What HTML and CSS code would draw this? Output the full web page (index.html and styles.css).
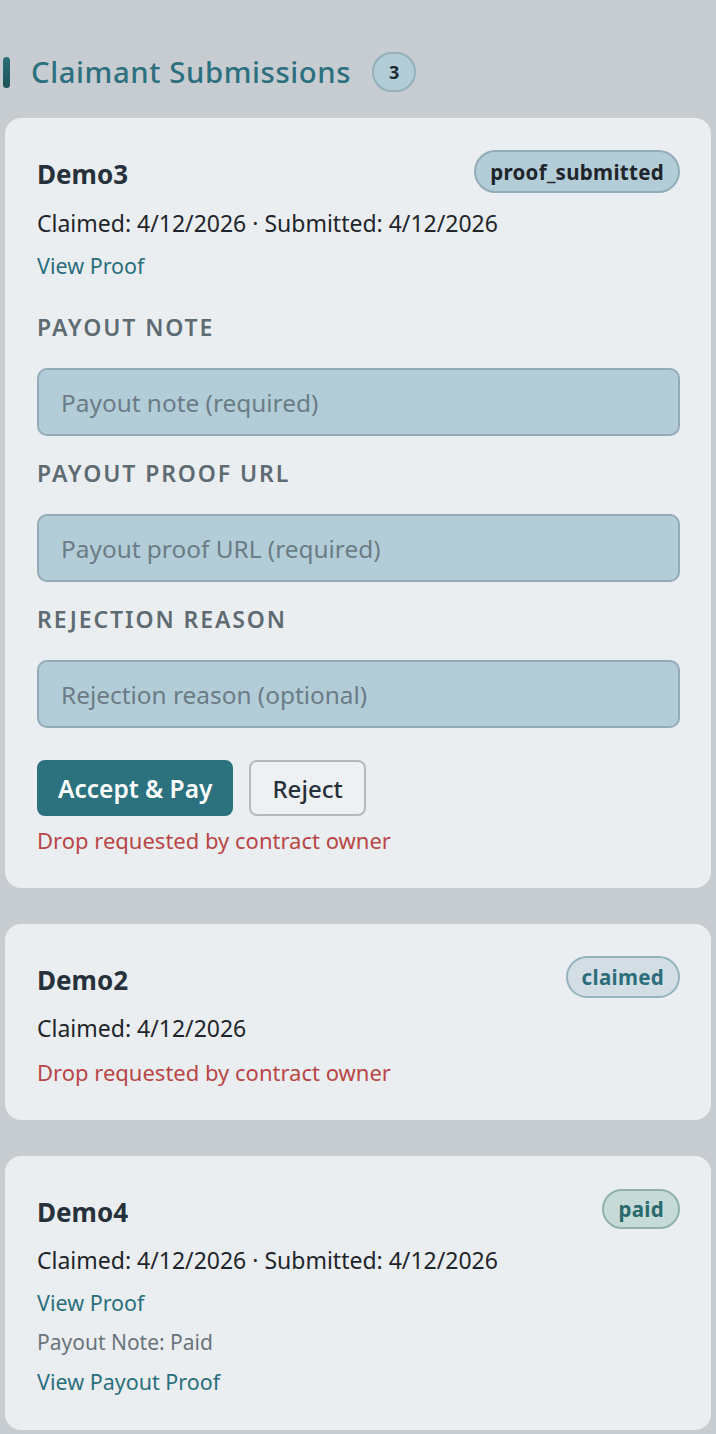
FILE: index.html
```html
<!DOCTYPE html>
<html lang="en">
<head>
<meta charset="utf-8">
<title>Claimant Submissions</title>
<link rel="stylesheet" href="styles.css">
</head>
<body>
<main class="page">
  <header class="section-head">
    <span class="accent-bar"></span>
    <h2 class="section-title">Claimant Submissions</h2>
    <span class="count-badge">3</span>
  </header>

  <article class="card">
    <div class="card-head">
      <h3 class="card-title">Demo3</h3>
      <span class="status status-proof">proof_submitted</span>
    </div>
    <p class="meta">Claimed: 4/12/2026 · Submitted: 4/12/2026</p>
    <a class="link" href="#">View Proof</a>
    <label class="field-label">Payout Note</label>
    <input class="field" type="text" placeholder="Payout note (required)">
    <label class="field-label">Payout Proof URL</label>
    <input class="field" type="text" placeholder="Payout proof URL (required)">
    <label class="field-label">Rejection Reason</label>
    <input class="field" type="text" placeholder="Rejection reason (optional)">
    <div class="actions">
      <button class="btn btn-primary">Accept &amp; Pay</button>
      <button class="btn btn-outline">Reject</button>
    </div>
    <p class="warn">Drop requested by contract owner</p>
  </article>

  <article class="card">
    <div class="card-head">
      <h3 class="card-title">Demo2</h3>
      <span class="status status-claimed">claimed</span>
    </div>
    <p class="meta">Claimed: 4/12/2026</p>
    <p class="warn">Drop requested by contract owner</p>
  </article>

  <article class="card">
    <div class="card-head">
      <h3 class="card-title">Demo4</h3>
      <span class="status status-paid">paid</span>
    </div>
    <p class="meta">Claimed: 4/12/2026 · Submitted: 4/12/2026</p>
    <a class="link" href="#">View Proof</a>
    <p class="note">Payout Note: Paid</p>
    <a class="link link-after-note" href="#">View Payout Proof</a>
  </article>
</main>
</body>
</html>
```

FILE: styles.css
```css
* { box-sizing: border-box; }

html, body {
  margin: 0;
  background: #c7ccd0;
}

body {
  font-family: "Noto Sans", "Open Sans", sans-serif;
  color: #1f252b;
}

.page {
  padding: 52px 5px 20px;
  display: flex;
  flex-direction: column;
  gap: 36px;
}

.section-head {
  display: flex;
  align-items: center;
  margin-left: -2px;
  height: 40px;
  margin-bottom: -10px;
}

.accent-bar {
  width: 7px;
  height: 31px;
  border-radius: 4px;
  background: linear-gradient(#2a6f7a, #1d5259);
  margin-right: 21px;
}

.section-title {
  margin: 0;
  font-size: 29.3px;
  font-weight: 500;
  color: #2c7080;
  letter-spacing: 0.6px;
}

.count-badge {
  margin-left: 21px;
  width: 44px;
  height: 40px;
  border-radius: 20px;
  background: #b3cdd8;
  border: 2px solid #93b0bb;
  display: flex;
  align-items: center;
  justify-content: center;
  font-size: 18px;
  font-weight: 700;
  color: #1f2a33;
}

.card {
  background: #eaeef1;
  border-radius: 16px;
  padding: 32px 31px 33px 32px;
  display: flex;
  flex-direction: column;
  align-items: flex-start;
}

.card-head {
  align-self: stretch;
  display: flex;
  justify-content: space-between;
  align-items: flex-start;
}

.card-title {
  margin: 6px 0 0;
  font-size: 26px;
  font-weight: 700;
  color: #27313b;
  line-height: 36px;
}

.status {
  height: 43px;
  padding: 0 14px;
  border-radius: 22px;
  border: 2px solid #93adb8;
  display: flex;
  align-items: center;
  font-size: 20.5px;
  font-weight: 700;
  letter-spacing: 0.3px;
}

.status-proof { background: #b3cdd8; color: #1f252b; }
.status-claimed { background: #d2dee4; color: #2d6e7d; border-color: #94b3bd; height: 42px; }
.status-paid { background: #c6dbd7; color: #296a6c; border-color: #8fb2ab; height: 40px; margin-top: 1px; }

.meta {
  margin: 14px 0 0;
  font-size: 23px;
  line-height: 32px;
  color: #1f252b;
}

.link {
  margin-top: 12px;
  font-size: 21.5px;
  line-height: 30px;
  color: #2b6f7d;
  text-decoration: none;
}

.note {
  margin: 9px 0 0;
  font-size: 21px;
  line-height: 30px;
  color: #6a747b;
}

.link-after-note { margin-top: 10px; }

.field-label {
  margin-top: 31px;
  font-size: 23px;
  line-height: 30px;
  font-weight: 600;
  text-transform: uppercase;
  letter-spacing: 1.9px;
  color: #5f6b73;
}

.field {
  align-self: stretch;
  margin-top: 26px;
  height: 68px;
  border: 2px solid #93abb6;
  border-radius: 10px;
  background: #b3cdd8;
  padding: 0 22px;
  font-family: inherit;
  font-size: 24.4px;
  color: #1f252b;
  outline: none;
}

.field::placeholder { color: #6b7c86; }

.field + .field-label { margin-top: 22px; }

.actions {
  margin-top: 32px;
  display: flex;
  gap: 16px;
}

.btn {
  height: 56px;
  border-radius: 8px;
  font-family: inherit;
  font-size: 24.5px;
  font-weight: 600;
  padding: 0 21px;
  cursor: pointer;
}

.btn-primary {
  background: #2b717e;
  color: #ffffff;
  border: 0;
}

.btn-outline {
  background: #eef1f3;
  color: #26303a;
  border: 2px solid #b5babd;
  font-weight: 500;
  font-size: 24px;
}

.warn {
  margin: 9px 0 0;
  font-size: 22px;
  line-height: 30px;
  color: #b94646;
}

.meta + .warn { margin-top: 13px; }
```
